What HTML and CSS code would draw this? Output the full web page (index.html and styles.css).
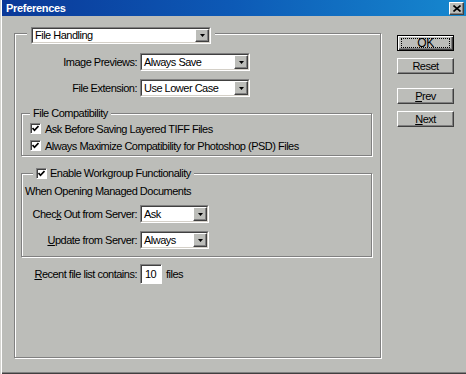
FILE: index.html
```html
<!DOCTYPE html>
<html lang="en">
<head>
    <meta charset="UTF-8">
    <title>Preferences</title>
    <link rel="stylesheet" href="styles.css">
</head>
<body>
    <div class="window">
        <div class="titlebar">
            <span class="title">Preferences</span>
            <span class="close">
                <svg width="8" height="7" viewBox="0 0 8 7"><path d="M0.5 0.5 L7.5 6.5 M7.5 0.5 L0.5 6.5" stroke="#000" stroke-width="1.6" fill="none"/></svg>
            </span>
        </div>

        <div class="body">
            <fieldset class="panel">
                <legend class="panel-head">
                    <div class="combo combo-head">
                        <div class="combo-in">
                            <span class="combo-text">File Handling</span>
                            <span class="combo-btn"><svg width="5" height="3" viewBox="0 0 5 3"><polygon points="0,0 5,0 2.5,3" fill="#000"/></svg></span>
                        </div>
                    </div>
                </legend>

                <div class="field-row first">
                    <span class="label">Ima<u>g</u>e Previews:</span>
                    <div class="combo combo-mid">
                        <div class="combo-in">
                            <span class="combo-text">Always Save</span>
                            <span class="combo-btn"><svg width="5" height="3" viewBox="0 0 5 3"><polygon points="0,0 5,0 2.5,3" fill="#000"/></svg></span>
                        </div>
                    </div>
                </div>
                <div class="field-row second">
                    <span class="label">File Extension:</span>
                    <div class="combo combo-mid">
                        <div class="combo-in">
                            <span class="combo-text">Use Lower Case</span>
                            <span class="combo-btn"><svg width="5" height="3" viewBox="0 0 5 3"><polygon points="0,0 5,0 2.5,3" fill="#000"/></svg></span>
                        </div>
                    </div>
                </div>

                <fieldset class="group compat">
                    <legend class="group-head">File Compatibility</legend>
                    <div class="check-row">
                        <span class="check"><svg width="7" height="7" viewBox="0 0 7 7"><polyline points="0.5,3 2.5,5.3 6.5,1" stroke="#000" stroke-width="1.7" fill="none"/></svg></span>
                        <span>Ask Before Saving Layered TIFF Files</span>
                    </div>
                    <div class="check-row">
                        <span class="check"><svg width="7" height="7" viewBox="0 0 7 7"><polyline points="0.5,3 2.5,5.3 6.5,1" stroke="#000" stroke-width="1.7" fill="none"/></svg></span>
                        <span>Always Maximize Compatibility for Photoshop (PSD) Files</span>
                    </div>
                </fieldset>

                <fieldset class="group workgroup">
                    <legend class="group-head check-head">
                        <span class="check"><svg width="7" height="7" viewBox="0 0 7 7"><polyline points="0.5,3 2.5,5.3 6.5,1" stroke="#000" stroke-width="1.7" fill="none"/></svg></span>
                        <span>Enable Workgroup Functionality</span>
                    </legend>
                    <div class="note">When Opening Managed Documents</div>
                    <div class="field-row wg-first">
                        <span class="label label-wg">Chec<u>k</u> Out from Server:</span>
                        <div class="combo combo-small">
                            <div class="combo-in">
                                <span class="combo-text">Ask</span>
                                <span class="combo-btn"><svg width="5" height="3" viewBox="0 0 5 3"><polygon points="0,0 5,0 2.5,3" fill="#000"/></svg></span>
                            </div>
                        </div>
                    </div>
                    <div class="field-row wg-second">
                        <span class="label label-wg"><u>U</u>pdate from Server:</span>
                        <div class="combo combo-small">
                            <div class="combo-in">
                                <span class="combo-text">Always</span>
                                <span class="combo-btn"><svg width="5" height="3" viewBox="0 0 5 3"><polygon points="0,0 5,0 2.5,3" fill="#000"/></svg></span>
                            </div>
                        </div>
                    </div>
                </fieldset>

                <div class="field-row recent">
                    <span class="label"><u>R</u>ecent file list contains:</span>
                    <div class="numbox"><span>10</span></div>
                    <span class="suffix">files</span>
                </div>
            </fieldset>

            <div class="buttons">
                <div class="btn btn-default"><span class="focus">OK</span></div>
                <div class="btn">Reset</div>
                <div class="btn btn-gap"><span><u>P</u>rev</span></div>
                <div class="btn"><span><u>N</u>ext</span></div>
            </div>
        </div>
    </div>
</body>
</html>
```

FILE: styles.css
```css
* {
    box-sizing: border-box;
}
body {
    margin: 0;
    background: #bcbdb9;
    font-family: "Liberation Sans", Arial, sans-serif;
    font-size: 11px;
    letter-spacing: -0.5px;
    color: #000;
}
u {
    text-decoration: underline;
    text-underline-offset: 1px;
}
.window {
    width: 466px;
    height: 374px;
    padding-left: 2px;
    background: #bcbdb9;
    box-shadow: inset 1px 0 0 #d4d4d0, inset 2px 0 0 #fff, inset 0 -1px 0 #404040, inset 0 -2px 0 #808080;
    overflow: hidden;
}
.titlebar {
    height: 16px;
    display: flex;
    justify-content: space-between;
    padding: 0 2px 0 4px;
    background: linear-gradient(to right, #0a3898, #0d5ab6 50%, #1688cf);
    color: #fff;
}
.title {
    font-weight: bold;
    font-size: 11px;
    letter-spacing: -0.3px;
    line-height: 16px;
}
.close {
    width: 15px;
    height: 13px;
    margin-top: 2px;
    display: flex;
    align-items: center;
    justify-content: center;
    background: #bcbdb9;
    border: 1px solid;
    border-color: #fff #404040 #404040 #fff;
    box-shadow: inset -1px -1px 0 #808080;
}

.body {
    display: flex;
    align-items: flex-start;
}

/* group boxes */
fieldset {
    margin: 0;
    padding: 0;
    min-inline-size: 0;
    border: 1px solid #808080;
    box-shadow: inset 1px 1px 0 #fff, 1px 1px 0 #fff;
}
legend {
    background: #bcbdb9;
}
.panel {
    width: 367px;
    margin: 7px 0 0 12px;
    padding: 9px 0 73px 0;
}
.panel-head {
    margin-left: 12px;
    padding: 4px 4px 0 4px;
}
.group {
    margin: 0 8px 0 6px;
}
.group-head {
    margin-left: 8px;
    padding: 0 3px;
    line-height: 13px;
}
.check-head {
    margin-left: 11px;
    display: flex;
    align-items: center;
    gap: 3px;
}
.compat {
    margin-top: 10px;
    padding: 2px 0 3px 8px;
}
.compat .group-head {
    margin-left: 0;
}
.workgroup {
    margin-top: 11px;
    padding: 0 0 7px 0;
}

/* rows */
.field-row {
    display: flex;
    align-items: center;
    gap: 3px;
}
.second {
    margin-top: 8px;
}
.label {
    width: 122px;
    text-align: right;
    white-space: nowrap;
}
.label-wg {
    width: 115px;
}
.note {
    margin-top: 5px;
    padding-left: 3px;
    line-height: 13px;
}
.wg-first {
    margin-top: 7px;
}
.wg-second {
    margin-top: 8px;
}
.recent {
    margin-top: 7px;
}
.suffix {
    margin-left: 1px;
}

.check-row {
    display: flex;
    align-items: center;
    gap: 4px;
    height: 13px;
    white-space: nowrap;
}
.check-row + .check-row {
    margin-top: 4px;
}
.check {
    width: 11px;
    height: 11px;
    flex: none;
    display: flex;
    align-items: center;
    justify-content: center;
    background: #fff;
    border: 1px solid;
    border-color: #808080 #fff #fff #808080;
    box-shadow: inset 1px 1px 0 #404040;
}

/* combo boxes */
.combo {
    display: flex;
    height: 18px;
    background: #fff;
    border: 1px solid;
    border-color: #808080 #fff #fff #808080;
}
.combo-head {
    width: 180px;
    height: 17px;
}
.combo-mid {
    width: 110px;
}
.combo-small {
    width: 69px;
}
.combo-in {
    flex: 1;
    display: flex;
    border: 1px solid;
    border-color: #404040 #d4d0c8 #d4d0c8 #404040;
}
.combo-text {
    flex: 1;
    padding-left: 2px;
    line-height: 14px;
    white-space: nowrap;
    overflow: hidden;
}
.combo-head .combo-text {
    line-height: 13px;
}
.combo-btn {
    width: 14px;
    flex: none;
    display: flex;
    align-items: center;
    justify-content: center;
    background: #bcbdb9;
    border: 1px solid;
    border-color: #fff #404040 #404040 #fff;
    box-shadow: inset -1px -1px 0 #808080;
}
.numbox {
    width: 22px;
    height: 20px;
    background: #fff;
    border: 1px solid;
    border-color: #808080 #fff #fff #808080;
    box-shadow: inset 1px 1px 0 #404040;
    padding: 3px 0 0 4px;
    line-height: 13px;
}

/* buttons */
.buttons {
    width: 57px;
    margin: 19px 0 0 16px;
    display: flex;
    flex-direction: column;
    gap: 7px;
}
.btn {
    height: 16px;
    display: flex;
    align-items: center;
    justify-content: center;
    background: #bcbdb9;
    border: 1px solid;
    border-color: #fff #404040 #404040 #fff;
    box-shadow: inset -1px -1px 0 #808080;
}
.btn-default {
    border-color: #000;
    box-shadow: inset 1px 1px 0 #fff, inset -1px -1px 0 #404040, inset -2px -2px 0 #808080;
}
.btn-gap {
    margin-top: 7px;
}
.focus {
    align-self: stretch;
    flex: 1;
    margin: 2px 3px;
    border: 1px dotted #000;
    display: flex;
    align-items: center;
    justify-content: center;
    font-size: 12px;
}
```
